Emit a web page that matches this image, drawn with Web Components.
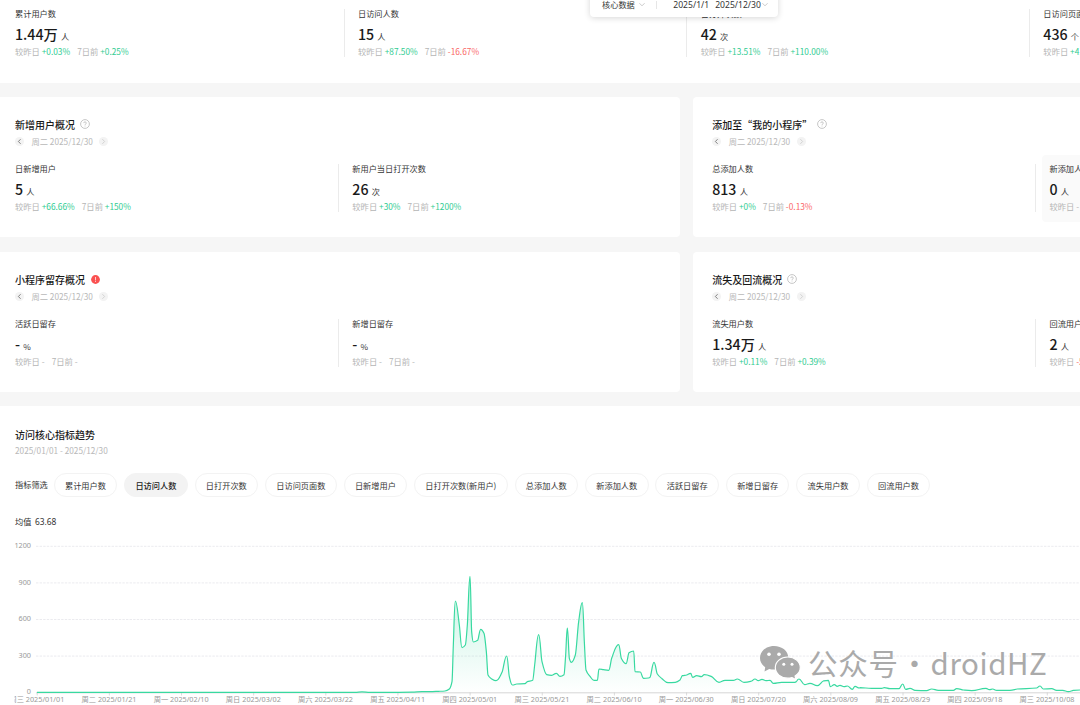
<!DOCTYPE html>
<html lang="zh-CN">
<head>
<meta charset="utf-8">
<title>数据概况</title>
<style>
html,body{margin:0;height:705px;overflow:hidden;background:#f6f6f6}
body{font-family:"Noto Sans CJK SC",sans-serif;font-size:8.2px;color:#333}
</style>
</head>
<body>
<data-dashboard></data-dashboard>
<script>
const define = (name, html, setup) => customElements.define(name, class extends HTMLElement {
  connectedCallback() {
    if (this.shadowRoot) return;
    const t = document.createElement('template');
    t.innerHTML = typeof html === 'function' ? html(this) : html;
    this.attachShadow({mode: 'open'}).append(t.content.cloneNode(true));
    if (setup) setup(this);
  }
});

define('metric-cell', el => {
  const g = n => el.getAttribute(n) || '';
  const cls = v => v[0] === '+' ? 'up' : v.length > 1 ? 'down' : '';
  return `<style>
  :host{display:block;box-sizing:border-box;height:48px;white-space:nowrap;flex:none;position:relative}
  :host([divided]){border-left:1px solid #ebebeb;padding-left:13.3px}
  :host([hot])::before{content:"";position:absolute;left:6px;right:0;top:-9px;height:67px;border-radius:4px;background:#fafafa;z-index:0}
  div{position:relative}
  .l{height:10px;line-height:8px;color:#353535}
  .v{height:24px;margin:3px 0 1px;line-height:24px;font-size:14.2px;font-weight:500;color:#1a1a1a}
  .v small{display:inline-block;line-height:10px;font-size:8.2px;font-weight:400;margin-left:3.2px;color:#353535}
  .d{height:10px;line-height:8px;color:#b5b5b5;font-size:8.3px}
  .d span+span{margin-left:7px}
  .up{color:#30cc92}.down{color:#fa6868}
  </style><div class="l">${g('label')}</div><div class="v">${g('value')}<small>${g('unit')}</small></div>
  <div class="d"><span>较昨日 <b style="font-weight:400" class="${cls(g('day'))}">${g('day')}</b></span><span>7日前 <b style="font-weight:400" class="${cls(g('week'))}">${g('week')}</b></span></div>`;
});

define('hint-icon', el => el.hasAttribute('alert') ?
  `<style>:host{display:block;width:9px;height:9px}svg{display:block}</style><svg width="9" height="9" viewBox="0 0 9 9"><circle cx="4.5" cy="4.5" r="4.4" fill="#fa5151"/><path d="M4.5 2v3.4M4.5 6.1v.9" stroke="#fff" stroke-width=".9" opacity=".8"/></svg>` :
  `<style>:host{display:block;width:10px;height:10px}svg{display:block}</style><svg width="10" height="10" viewBox="0 0 10 10" fill="none" stroke="#b4b4b4" stroke-width=".75"><circle cx="5" cy="5" r="4.4"/><path d="M3.7 4.1c0-1.7 2.6-1.7 2.6 0 0 .8-1.3 1-1.3 1.8M5 6.6v.8"/></svg>`);

define('date-stepper', `<style>
  :host{display:flex;align-items:center;height:16px;color:#b8b8b8;white-space:nowrap;font-size:8.25px}
  i{width:9px;height:9px;border-radius:50%;background:#f3f3f3;display:grid;place-items:center}
  span{margin:-2px 6.5px 0 7.5px}svg{display:block}
  </style><i><svg width="5" height="7" viewBox="0 0 5 7" fill="none" stroke="#666" stroke-width=".8"><path d="M3.6 1.2 1.4 3.5 3.6 5.8"/></svg></i><span><slot></slot></span><i><svg width="5" height="7" viewBox="0 0 5 7" fill="none" stroke="#ccc" stroke-width=".8"><path d="M1.4 1.2 3.6 3.5 1.4 5.8"/></svg></i>`);

define('overview-card', el => `<style>
  :host{display:block;box-sizing:border-box;height:140.6px;background:#fff;border-radius:4px;padding:20px 0 0 var(--inset,15px);overflow:hidden}
  .t{display:flex;align-items:center;height:16px;font-size:10px;font-weight:500;color:#1a1a1a;white-space:nowrap}
  hint-icon{margin:-1px 0 0 ${el.getAttribute('gap') || '4.5px'}}
  .m{display:grid;grid-template-columns:323px 350px;margin-top:14px}
  date-stepper{margin-top:1px}
  </style><div class="t">${el.getAttribute('heading')}<hint-icon ${el.hasAttribute('alert') ? 'alert' : ''}></hint-icon></div>
  <date-stepper>周二 2025/12/30</date-stepper><div class="m"><slot></slot></div>`);

define('filter-chip', `<style>
  :host{display:block;box-sizing:border-box;height:24px;line-height:22px;padding:0 10.3px;border:1px solid #f3f3f3;border-radius:12px;white-space:nowrap;color:#353535}
  :host([active]){background:#f3f3f3;color:#1a1a1a;font-weight:500}
  </style><slot></slot>`);

define('range-toolbar', `<style>
  :host{display:flex;align-items:center;box-sizing:border-box;width:188px;height:27px;background:#fff;border-radius:4px;box-shadow:0 1px 6px rgba(0,0,0,.16);padding:2px 9px 0 12px;white-space:nowrap;color:#353535;font-size:8.2px}
  svg{display:block;flex:none}
  .s{width:1px;height:8px;background:#e6e6e6;margin:0 16.5px 0 11px}
  .n{font:8.6px "Noto Sans",sans-serif}
  .n+.n{margin-left:6px}
  .k{margin-top:-1px}
  </style><span class="k">核心数据</span><svg style="margin-left:4px" width="6" height="5" viewBox="0 0 6 5" fill="none" stroke="#b5b5b5" stroke-width=".7"><path d="m.4 1.2 2.6 2.6 2.6-2.6"/></svg><span class="s"></span><span class="n">2025/1/1</span><span class="n">2025/12/30</span><svg style="margin-left:1px" width="6" height="5" viewBox="0 0 6 5" fill="none" stroke="#b5b5b5" stroke-width=".7"><path d="m.4 1.2 2.6 2.6 2.6-2.6"/></svg>`);

const near = (ox, oy, list) => list.trim().split(/\s+/).map(p => p.split(',').map(Number)).map(([x, y]) => [ox + x / 3, oy + y / 3]);
const series = [
  [37,692.4],[355,692.4],[362,691.8],[370,692.4],[412,692.2],[422,691.7],
  ...near(430,565,`0,380 25,379 45,378 58,372 66,350 70,240 76,108 88,180 96,248 106,240 112,180 120,34 125,200 130,231 143,226 152,193 162,205 169,260 174,330 184,341 198,347 216,322 230,273 238,335 247,360 260,357 285,356 292,350 308,346 314,300 326,209 336,290 350,329 365,331 379,325 390,334 402,329 407,270 412,189 418,280 424,292 436,270 446,170 457,113 463,230 468,315 480,334 492,346 502,346 507,312 520,314 536,316 545,280 566,239 574,280 588,296 597,263 611,258 615,320 631,321 641,340 656,339`),
  ...near(650,600,`0,232 12,187 22,222 36,236 54,248 76,247 90,240 97,227 110,225 122,220 128,232 140,227 154,230 163,224 185,230 207,247 225,241 250,241 262,237 282,247 305,243 315,237 325,242 336,238 348,242 360,241 370,250 395,247 425,247 435,247 447,237 464,254 480,250 502,257 520,243 535,241 541,260 553,254 562,259 570,256 582,260 592,258 607,268 615,259 628,264`),
  ...near(860,600,`0,263 35,265 65,265 73,263 90,266 117,266 128,252 137,268 150,265 165,271 200,272 215,267 235,271 280,271 290,266 310,270 335,272 378,265 388,269 398,267 410,271 450,271 472,267 530,264 540,258 550,267 575,266 590,271 608,271 625,275 640,271 665,270`)
].map(([x, y]) => [x, y - 536]);

/* Monotone cubic interpolation keeps the peaks rounded without overshoot. */
function curve(p) {
  const n = p.length, s = [], m = [];
  for (let i = 0; i < n - 1; i++) s.push((p[i+1][1] - p[i][1]) / (p[i+1][0] - p[i][0]));
  for (let i = 0; i < n; i++) {
    const a = s[i-1], b = s[i];
    m.push(a === undefined || b === undefined || a * b <= 0 ? 0 : 2 * a * b / (a + b));
  }
  let d = `M${p[0]}`;
  for (let i = 0; i < n - 1; i++) {
    const flat = (m[i] === 0 ? .45 : .333), end = (m[i+1] === 0 ? .45 : .333), w = p[i+1][0] - p[i][0];
    d += `C${p[i][0]+w*flat} ${p[i][1]+m[i]*w*flat} ${p[i+1][0]-w*end} ${p[i+1][1]-m[i+1]*w*end} ${p[i+1]}`;
  }
  return d;
}

define('trend-chart', () => {
  const line = curve(series);
  const labels = ['周三 2025/01/01','周二 2025/01/21','周一 2025/02/10','周日 2025/03/02','周六 2025/03/22','周五 2025/04/11','周四 2025/05/01','周三 2025/05/21','周二 2025/06/10','周一 2025/06/30','周日 2025/07/20','周六 2025/08/09','周五 2025/08/29','周四 2025/09/18','周三 2025/10/08'];
  const grid = [1200,900,600,300,0].map((v, i) => {
    const y = 10.3 + i * 36.6;
    return `<text x="31" y="${y + 1.7}" text-anchor="end">${v}</text>` + (v ? `<path d="M36 ${y}H1080" stroke="#e9e9ed" stroke-dasharray="2.4 1.2" stroke-width=".9"/>` : '');
  }).join('');
  const ticks = labels.map((l, i) => {
    const x = 37.2 + i * 72.15;
    return `<path d="M${x} 156.5v3" stroke="#ccc" stroke-width=".7"/><text x="${x - .3}" y="166.4" text-anchor="middle">${l}</text>`;
  }).join('');
  return `<style>:host{display:block}svg{display:block}text{font:7.25px "Noto Sans","Noto Sans CJK SC",sans-serif;fill:#999}</style>
  <svg width="1080" height="169" viewBox="0 0 1080 169"><defs><linearGradient id="g" gradientUnits="userSpaceOnUse" x1="0" y1="40" x2="0" y2="157"><stop offset="0" stop-color="#2fd39a" stop-opacity=".28"/><stop offset="1" stop-color="#2fd39a" stop-opacity="0"/></linearGradient><clipPath id="c"><rect x="14.6" width="1065.4" height="169"/></clipPath></defs>
  <g clip-path="url(#c)">${grid}<path d="M36 156.8H1080" stroke="#ccc" stroke-width=".8"/>${ticks}</g>
  <path d="${line}V156.5H37Z" fill="url(#g)"/><path d="${line}" fill="none" stroke="#38d9a0" stroke-width="1.2"/></svg>`;
});

define('account-mark', `<style>
  :host{display:flex;align-items:center;color:#aaa;white-space:nowrap;height:44px;font:29.5px/44px "Noto Sans CJK SC",sans-serif}
  svg{display:block;margin-right:7px;flex:none}
  .a{letter-spacing:.7px}.b{width:32px;text-align:center}.c{letter-spacing:.55px}
  </style><svg width="42" height="40" viewBox="0 0 42 40"><path fill="#aaa" d="M15 4C7 4 1 9.3 1 16c0 3.8 2 7 5.200 9.200L5.500 29.500l4.700-2.600c1.600.4 3.200.7 4.800.7 8 0 14.300-5.200 14.300-11.900S23 4 15 4Z"/><path fill="#aaa" stroke="#fff" stroke-width="1.2" d="M28.800 15c-7 0-12.500 4.700-12.500 10.600S21.800 36.200 28.800 36.200c1.500 0 2.900-.2 4.200-.6l3.900 2-.8-3.600c3.200-1.900 5.200-4.900 5.200-8.400C41.300 19.700 35.800 15 28.800 15Z"/><g fill="#fff"><circle cx="10" cy="12.200" r="1.800"/><circle cx="20" cy="12.200" r="1.800"/><circle cx="24.800" cy="22.300" r="1.500"/><circle cx="33" cy="22.300" r="1.500"/></g></svg><span class="a">公众号</span><span class="b">·</span><span class="c">droidHZ</span>`);

define('data-dashboard', `<style>
  :host{display:block;position:relative;width:1080px;height:705px;overflow:hidden}
  .top{box-sizing:border-box;height:83px;background:#fff;padding:9px 0 0 15px;display:grid;grid-template-columns:328.7px 342.7px 342.7px 342.7px}
  .cards{display:grid;grid-template-columns:679.5px 700px;gap:14.3px 13.7px;margin:13.800px 0 13.700px}
  overview-card{--inset:15px}
  overview-card:nth-child(even){--inset:19px}
  overview-card:nth-child(odd){border-radius:0 4px 4px 0}
  .trend{background:#fff;height:300px;padding-top:21.500px}
  h2{margin:0 0 0 15px;font-size:10px;font-weight:500;line-height:16px;color:#1a1a1a}
  .r{margin-left:15px;height:15px;line-height:14px;color:#b8b8b8;font-size:8.25px}
  .f{display:flex;align-items:center;margin:15px 0 0 15px;height:24px;gap:6.900px}
  .f>span{line-height:20px;margin:-3px -1px 0 0;white-space:nowrap}
  .avg{margin:17px 0 0 15px;height:14px;line-height:14px}
  .avg span{font:8.400px "Noto Sans",sans-serif;margin-left:3.500px}
  trend-chart{margin-top:7.500px}
  range-toolbar{position:absolute;left:590px;top:-10px;z-index:3}
  account-mark{position:absolute;left:759px;top:640px}
  </style>
  <section class="top">
    <metric-cell label="累计用户数" value="1.44万" unit="人" day="+0.03%" week="+0.25%"></metric-cell>
    <metric-cell divided label="日访问人数" value="15" unit="人" day="+87.50%" week="-16.67%"></metric-cell>
    <metric-cell divided label="日打开次数" value="42" unit="次" day="+13.51%" week="+110.00%"></metric-cell>
    <metric-cell divided label="日访问页面数" value="436" unit="个" day="+41.10%" week="+57.40%"></metric-cell>
  </section>
  <section class="cards">
    <overview-card heading="新增用户概况"><metric-cell label="日新增用户" value="5" unit="人" day="+66.66%" week="+150%"></metric-cell><metric-cell divided label="新用户当日打开次数" value="26" unit="次" day="+30%" week="+1200%"></metric-cell></overview-card>
    <overview-card heading="添加至“我的小程序”"><metric-cell label="总添加人数" value="813" unit="人" day="+0%" week="-0.13%"></metric-cell><metric-cell divided hot label="新添加人数" value="0" unit="人" day="-" week="-"></metric-cell></overview-card>
    <overview-card heading="小程序留存概况" alert gap="6px"><metric-cell label="活跃日留存" value="-" unit="%" day="-" week="-"></metric-cell><metric-cell divided label="新增日留存" value="-" unit="%" day="-" week="-"></metric-cell></overview-card>
    <overview-card heading="流失及回流概况"><metric-cell label="流失用户数" value="1.34万" unit="人" day="+0.11%" week="+0.39%"></metric-cell><metric-cell divided label="回流用户数" value="2" unit="人" day="-50%" week="-50%"></metric-cell></overview-card>
  </section>
  <section class="trend">
    <h2>访问核心指标趋势</h2><div class="r">2025/01/01 - 2025/12/30</div>
    <div class="f"><span>指标筛选</span><filter-chip>累计用户数</filter-chip><filter-chip active>日访问人数</filter-chip><filter-chip>日打开次数</filter-chip><filter-chip>日访问页面数</filter-chip><filter-chip>日新增用户</filter-chip><filter-chip>日打开次数(新用户)</filter-chip><filter-chip>总添加人数</filter-chip><filter-chip>新添加人数</filter-chip><filter-chip>活跃日留存</filter-chip><filter-chip>新增日留存</filter-chip><filter-chip>流失用户数</filter-chip><filter-chip>回流用户数</filter-chip></div>
    <div class="avg">均值<span>63.68</span></div>
    <trend-chart></trend-chart>
  </section>
  <range-toolbar></range-toolbar>
  <account-mark></account-mark>`);
</script>
</body>
</html>
